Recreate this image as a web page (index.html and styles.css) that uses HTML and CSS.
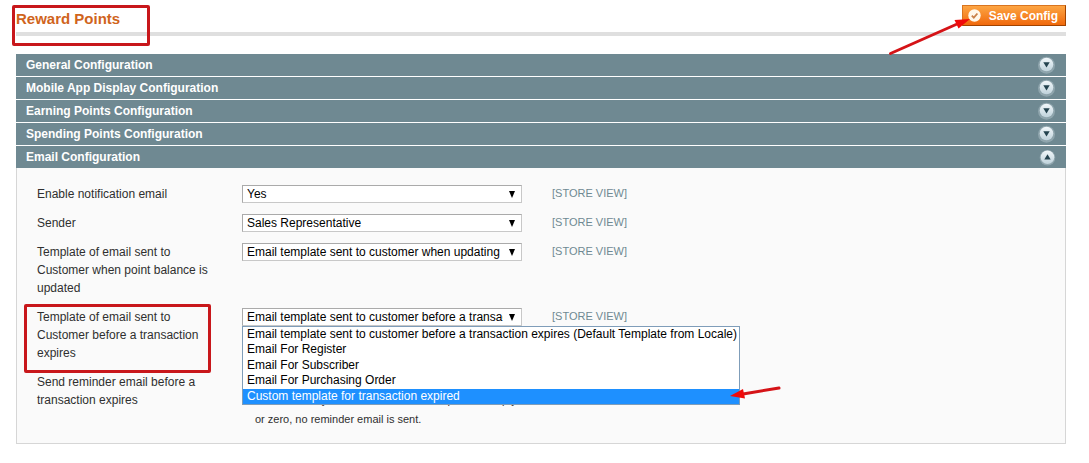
FILE: index.html
```
<!DOCTYPE html>
<html lang="en">
<head>
  <meta charset="UTF-8">
  <meta name="viewport" content="width=device-width, initial-scale=1">
  <title>Reward Points</title>
  <link rel="stylesheet" href="styles.css">
</head>
<body>
  <svg class="symbols" width="0" height="0" aria-hidden="true">
    <linearGradient id="knob" x1="0" y1="0" x2="0" y2="1">
      <stop offset="0" stop-color="#f2f8fb"/>
      <stop offset="1" stop-color="#bfd2db"/>
    </linearGradient>
    <symbol id="icon-down" viewBox="0 0 18 18">
      <circle cx="8.5" cy="9.2" r="8.5" fill="#8fa5ad"/>
      <circle cx="8.5" cy="8.5" r="6.8" fill="url(#knob)"/>
      <path d="M5.3 6.2h6.4L8.5 11.6z" fill="#24434f"/>
    </symbol>
    <symbol id="icon-up" viewBox="0 0 18 18">
      <circle cx="9.5" cy="9.8" r="7.8" fill="#8fa5ad"/>
      <circle cx="9.5" cy="9.2" r="6.8" fill="url(#knob)"/>
      <path d="M6.3 11.6h6.4L9.5 6.2z" fill="#24434f"/>
    </symbol>
  </svg>

  <main class="page">
    <header class="content-header">
      <h3 class="title">Reward Points<span class="mark mark-title"></span></h3>
      <div class="form-buttons">
        <button type="button" class="save">
          <svg width="13" height="13" viewBox="0 0 13 13" aria-hidden="true">
            <circle cx="6.5" cy="6.5" r="6.2" fill="#fff8ea"/>
            <path d="M3.8 6.7l2 2 3.6-4.2" fill="none" stroke="#c9824a" stroke-width="1.8"/>
          </svg>
          Save Config
        </button>
        <svg class="arrow arrow-save" width="84" height="40" viewBox="0 0 84 40" aria-hidden="true">
          <path d="M2.5 36.5L68 7.5" stroke="#d51317" stroke-width="3" stroke-linecap="round"/>
          <path d="M82 2L70.500 11.500l-4-8.500z" fill="#f00a0a"/>
        </svg>
      </div>
    </header>

    <nav class="sections">
      <a class="section-head" href="#general">General Configuration <svg width="18" height="18"><use href="#icon-down"/></svg></a>
      <a class="section-head" href="#mobile">Mobile App Display Configuration <svg width="18" height="18"><use href="#icon-down"/></svg></a>
      <a class="section-head" href="#earning">Earning Points Configuration <svg width="18" height="18"><use href="#icon-down"/></svg></a>
      <a class="section-head" href="#spending">Spending Points Configuration <svg width="18" height="18"><use href="#icon-down"/></svg></a>
      <a class="section-head" href="#email">Email Configuration <svg width="18" height="18"><use href="#icon-up"/></svg></a>
    </nav>

    <form class="fieldset" id="email">
      <div class="row">
        <label for="enable">Enable notification email</label>
        <div class="value">
          <div class="select">
            <select id="enable"><option>Yes</option><option>No</option></select>
          </div>
        </div>
        <span class="scope">[STORE VIEW]</span>
      </div>

      <div class="row">
        <label for="sender">Sender</label>
        <div class="value">
          <div class="select">
            <select id="sender"><option>Sales Representative</option></select>
          </div>
        </div>
        <span class="scope">[STORE VIEW]</span>
      </div>

      <div class="row">
        <label for="tpl-update">Template of email sent to Customer when point balance is updated</label>
        <div class="value">
          <div class="select">
            <select id="tpl-update"><option>Email template sent to customer when updating balance</option></select>
          </div>
        </div>
        <span class="scope">[STORE VIEW]</span>
      </div>

      <div class="row">
        <label for="tpl-expire">Template of email sent to Customer before a transaction expires<span class="mark mark-label"></span></label>
        <div class="value">
          <div class="select">
            <select id="tpl-expire"><option>Email template sent to customer before a transaction expires (Default Template from Locale)</option></select>
          </div>
          <ul class="options" role="listbox" aria-label="Email templates">
            <li role="option">Email template sent to customer before a transaction expires (Default Template from Locale)</li>
            <li role="option">Email For Register</li>
            <li role="option">Email For Subscriber</li>
            <li role="option">Email For Purchasing Order</li>
            <li role="option" class="active" aria-selected="true">Custom template for transaction expired
              <svg class="arrow arrow-option" width="54" height="16" viewBox="0 0 54 16" aria-hidden="true">
                <path d="M14 9L50 3" stroke="#d51317" stroke-width="3" stroke-linecap="round"/>
                <path d="M1 11L14 4l2 9.5z" fill="#f00a0a"/>
              </svg>
            </li>
          </ul>
        </div>
        <span class="scope">[STORE VIEW]</span>
      </div>

      <div class="row">
        <label for="days">Send reminder email before a transaction expires</label>
        <div class="value">
          <input type="text" id="days">
          <p class="note">Number of days before a transaction expires. If empty<br>or zero, no reminder email is sent.</p>
        </div>
        <span class="scope">[STORE VIEW]</span>
      </div>
    </form>
  </main>
</body>
</html>
```
FILE: styles.css
```
* {
  box-sizing: border-box;
}

body {
  margin: 0;
  background: #fff;
  color: #2f2f2f;
  font: 12px/18px "Liberation Sans", Arial, sans-serif;
}

.symbols {
  position: absolute;
}

.page {
  padding: 5px 23px 19px 16px;
}

/* title and save button */
.content-header {
  display: flex;
  justify-content: space-between;
  align-items: flex-end;
  padding-bottom: 6px;
  margin-bottom: 18px;
  border-bottom: 4px solid #dfdfdf;
}

.title {
  position: relative;
  margin: 0;
  color: #d0641c;
  font-size: 15px;
  line-height: 15px;
}

.form-buttons {
  position: relative;
}

.save {
  display: flex;
  align-items: center;
  gap: 8px;
  height: 21px;
  padding: 0 7px 0 5px;
  border: 1px solid;
  border-color: #d9741f #a04300 #a04300 #d9741f;
  background: linear-gradient(#fda543, #f0690c);
  color: #fff;
  font: bold 12px/16px "Liberation Sans", Arial, sans-serif;
  cursor: pointer;
}

/* collapsible sections */
.sections {
  display: grid;
  gap: 1px;
}

.section-head {
  display: flex;
  justify-content: space-between;
  align-items: center;
  height: 22px;
  padding: 0 10px;
  background: #6f8992;
  color: #fff;
  font-weight: bold;
  text-decoration: none;
}

.fieldset {
  display: grid;
  gap: 11px;
  padding: 17px 20px 14px;
  border: 1px solid #d6d6d6;
  border-top: 0;
  background: #fafafa;
}

.row {
  display: grid;
  grid-template-columns: 175px 280px 1fr;
  column-gap: 30px;
  align-items: start;
}

.row label,
.value {
  position: relative;
}

.select {
  position: relative;
}

.select::after {
  content: "";
  position: absolute;
  top: 6px;
  right: 7px;
  border: 3px solid transparent;
  border-top: 7px solid #000;
  border-bottom: 0;
  pointer-events: none;
}

select,
input {
  display: block;
  width: 100%;
  height: 18px;
  margin: 0;
  padding: 0 18px 0 4px;
  border: 1px solid;
  border-color: #aaa #c8c8c8 #c8c8c8 #aaa;
  border-radius: 0;
  background: #fff;
  color: #000;
  font: 12px/16px "Liberation Sans", Arial, sans-serif;
  appearance: none;
}

.scope {
  color: #6f8992;
  font-size: 11px;
  line-height: 17px;
}

.note {
  margin: 0;
  padding-left: 13px;
  font-size: 11px;
  line-height: 19px;
  white-space: nowrap;
}

/* opened list of templates */
.options {
  position: absolute;
  top: 18px;
  left: 0;
  z-index: 1;
  display: grid;
  grid-auto-rows: 1fr;
  height: 79px;
  margin: 0;
  padding: 0;
  border: 1px solid #7f9db9;
  background: #fff;
  color: #000;
  line-height: 15px;
  list-style: none;
  white-space: nowrap;
}

.options li {
  position: relative;
  padding: 0 2px 0 4px;
}

.options .active {
  background: #1e90ff;
  color: #fff;
}

/* red marks */
.mark {
  position: absolute;
  border: 3px solid #c8171b;
  border-radius: 2px;
}

.mark-title {
  top: -6px;
  left: -4px;
  width: 138px;
  height: 41px;
}

.mark-label {
  top: -4px;
  left: -13px;
  width: 187px;
  height: 69px;
}

.arrow {
  position: absolute;
}

.arrow-save {
  top: 12px;
  right: 94px;
}

.arrow-option {
  top: -4px;
  right: -44px;
}
```
